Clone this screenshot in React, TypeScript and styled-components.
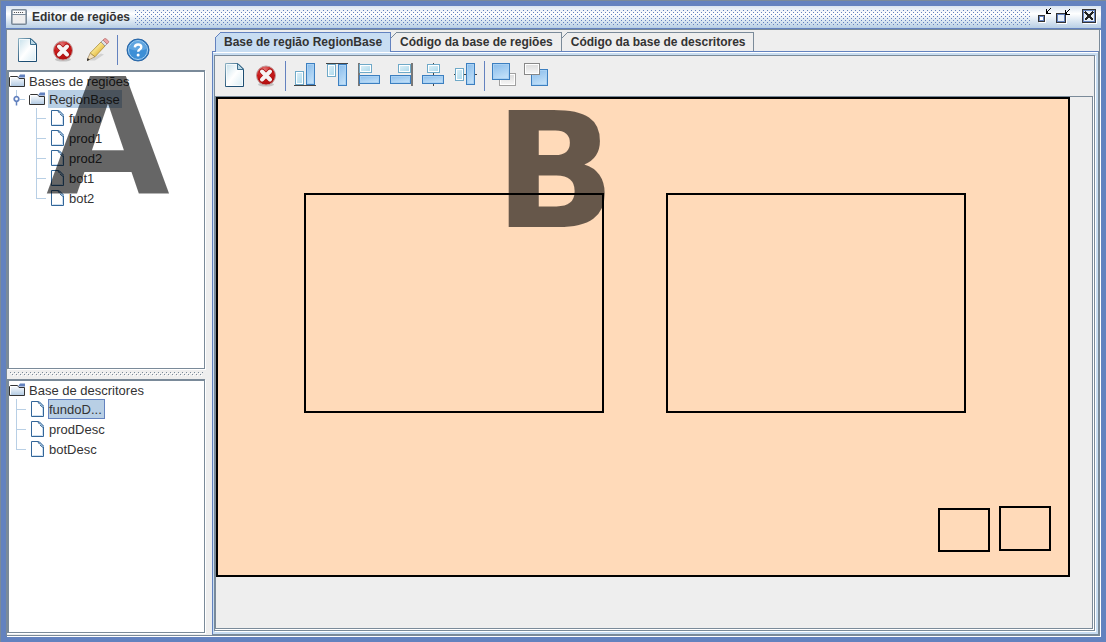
import React from 'react';
import styled, { createGlobalStyle } from 'styled-components';

const blue = '#6382bf';
const steel = '#7a8a99';
const pale = '#b8cfe5';
const tabFill = '#c8ddf2';
const panel = '#eeeeee';

const GlobalStyle = createGlobalStyle`
  * { box-sizing: border-box; }
  body { margin: 0; background: ${blue}; color: #333; font: 12px "Liberation Sans", Arial, sans-serif; }
  button { font: inherit; color: inherit; border: 0; background: none; padding: 0; }
  svg { display: block; flex: none; }
  ul { list-style: none; margin: 0; padding: 0; }
`;

const Frame = styled.div`
  display: flex;
  flex-direction: column;
  min-height: 100vh;
  padding: 6px 5px 5px 6px;
  background: ${blue};
  box-shadow: inset 1px 1px 0 ${steel};
`;

const TitleBar = styled.header`
  display: flex;
  align-items: center;
  height: 22px;
  padding: 0 4px 0 5px;
  gap: 5px;
  background: linear-gradient(#d8e4f0 0, #fff 35%, ${pale} 100%);
`;

const Title = styled.h1`
  margin: 0;
  font-size: 12px;
  line-height: 16px;
  white-space: nowrap;
`;

const TitleBumps = styled.div`
  flex: 1;
  height: 15px;
  background-image:
    conic-gradient(at 1px 1px, transparent 75%, ${blue} 0),
    conic-gradient(at 1px 1px, transparent 75%, ${blue} 0);
  background-size: 4px 4px;
  background-position: 0 0, 2px 2px;
`;

const WindowControls = styled.div`
  display: flex;
  gap: 4px;
`;

const WindowButton = styled.button<{ $gap?: number }>`
  width: 16px;
  height: 18px;
  margin-left: ${(p) => p.$gap ?? 0}px;
`;

const Body = styled.main`
  flex: 1;
  display: flex;
  min-width: 0;
  margin: 1px 1px 1px 0;
  background: ${panel};
  border: 1px solid ${steel};
  box-shadow: 1px 1px 0 #fff;
`;

const Sidebar = styled.aside`
  flex: none;
  width: 199px;
  margin-right: 6px;
  padding-bottom: 2px;
  display: flex;
  flex-direction: column;
`;

const Toolbar = styled.div`
  display: flex;
  align-items: center;
  height: 40px;
  padding-left: 2px;
`;

const ToolButton = styled.button<{ $wide?: boolean }>`
  display: flex;
  align-items: center;
  justify-content: center;
  width: ${(p) => (p.$wide ? 36 : 32)}px;
  height: 32px;
`;

const Separator = styled.div<{ $tight?: boolean }>`
  width: 1px;
  height: 30px;
  margin: 0 ${(p) => (p.$tight ? 2 : 3)}px 0 ${(p) => (p.$tight ? 0 : 3)}px;
  background: ${blue};
`;

const TreePane = styled.section<{ $share: number }>`
  position: relative;
  flex: ${(p) => p.$share} 1 0;
  margin-right: 1px;
  background: #fff;
  border: solid ${steel};
  border-width: 2px 1px 1px 2px;
  box-shadow: 1px 1px 0 #fff;
  font-size: 13px;
`;

const Splitter = styled.div`
  height: 10px;
  padding: 3px;
  background-image:
    conic-gradient(at 1px 1px, transparent 75%, ${steel} 0),
    conic-gradient(at 1px 1px, transparent 75%, ${steel} 0),
    conic-gradient(at 1px 1px, transparent 75%, #fff 0),
    conic-gradient(at 1px 1px, transparent 75%, #fff 0);
  background-size: 4px 4px;
  background-position: 1px 1px, 3px 3px, 0 0, 2px 2px;
  background-clip: content-box;
`;

const Row = styled.div<{ $leaf?: boolean }>`
  display: flex;
  align-items: center;
  height: ${(p) => (p.$leaf ? 20 : 18)}px;
`;

const Elbow = styled.span<{ $indent: number; $last?: boolean }>`
  align-self: stretch;
  width: 10px;
  margin: 0 5px 0 ${(p) => p.$indent}px;
  background:
    linear-gradient(${pale}, ${pale}) 0 0 / 1px ${(p) => (p.$last ? '10px' : '100%')} no-repeat,
    linear-gradient(${pale}, ${pale}) 0 10px / 10px 1px no-repeat;
`;

const HandleSlot = styled.span`
  width: 16px;
  margin-left: 4px;
`;

const Label = styled.span<{ $selected?: boolean; $focused?: boolean }>`
  height: ${(p) => (p.$focused ? 20 : 18)}px;
  line-height: ${(p) => (p.$focused ? 20 : 19)}px;
  margin-left: 3px;
  padding: 0 2px 0 0;
  border: solid ${(p) => (p.$focused ? blue : 'transparent')};
  border-width: ${(p) => (p.$focused ? '1px' : '0 0 0 1px')};
  background: ${(p) => (p.$selected ? pale : 'none')};
  white-space: nowrap;
`;

const AreaMark = styled.div<{ $x: number; $y: number }>`
  position: absolute;
  left: ${(p) => p.$x}px;
  top: ${(p) => p.$y}px;
  font: bold 160px/160px "DejaVu Sans", sans-serif;
  color: rgba(0, 0, 0, 0.6);
  pointer-events: none;
`;

const Workspace = styled.section`
  flex: 1;
  min-width: 0;
  display: flex;
  flex-direction: column;
  padding-top: 2px;
`;

const TabStrip = styled.div`
  display: flex;
  padding-left: 3px;
`;

const Tab = styled.button<{ $active?: boolean }>`
  position: relative;
  height: ${(p) => (p.$active ? 20 : 19)}px;
  margin-bottom: ${(p) => (p.$active ? -1 : 0)}px;
  padding: 0 8px 1px ${(p) => (p.$active ? 8 : 9)}px;
  z-index: ${(p) => (p.$active ? 1 : 0)};
  border: solid ${(p) => (p.$active ? blue : steel)};
  border-width: 1px 1px 0 ${(p) => (p.$active ? 1 : 0)}px;
  background: ${(p) => (p.$active ? tabFill : panel)};
  font-weight: bold;
  line-height: ${(p) => (p.$active ? 17 : 18)}px;
  white-space: nowrap;

  &::before {
    content: '';
    position: absolute;
    left: ${(p) => (p.$active ? -1 : 0)}px;
    top: -1px;
    width: 6px;
    height: 6px;
    background: linear-gradient(
      135deg,
      ${panel} 42%,
      ${(p) => (p.$active ? blue : steel)} 42% 54%,
      ${(p) => (p.$active ? tabFill : panel)} 54%
    );
  }
`;

const TabBody = styled.div`
  flex: 1;
  display: flex;
  flex-direction: column;
  padding: 3px 2px 2px 1px;
  background: ${tabFill};
  border: solid;
  border-width: 1px;
  border-color: ${blue} ${steel} ${steel} ${blue};
  box-shadow: inset 0 1px 0 #fff;
`;

const Editor = styled.div`
  flex: 1;
  display: flex;
  flex-direction: column;
  margin: 0 1px 1px 0;
  border: 1px solid ${steel};
  background: ${panel};
  box-shadow: 1px 1px 0 #fff;
`;

const EditorToolbar = styled(Toolbar)`
  padding-left: 3px;

  ${ToolButton} {
    margin-bottom: 2px;
  }
`;

const Viewport = styled.div`
  flex: 1;
  margin: 0 1px 1px 0;
  border: 1px solid ${steel};
  box-shadow: 1px 1px 0 #fff;
`;

const RegionCanvas = styled.div`
  position: relative;
  width: 854px;
  height: 480px;
  border: 2px solid #000;
  background: #ffdab9;
`;

const Region = styled.div<{ $x: number; $y: number; $w: number; $h: number }>`
  position: absolute;
  left: ${(p) => p.$x}px;
  top: ${(p) => p.$y}px;
  width: ${(p) => p.$w}px;
  height: ${(p) => p.$h}px;
  border: 2px solid #000;
`;

const Definitions = styled.svg`
  position: absolute;
`;

const Defs = () => (
  <Definitions width="0" height="0" aria-hidden="true">
    <defs>
      <linearGradient id="paper" x1="0" y1="0" x2="1" y2="1">
        <stop offset="0" stopColor="#c4dfea" />
        <stop offset="0.5" stopColor="#ffffff" />
        <stop offset="1" stopColor="#d5eaf3" />
      </linearGradient>
      <linearGradient id="paperEdge" x1="0" y1="0" x2="1" y2="1">
        <stop offset="0" stopColor="#8fb3c4" />
        <stop offset="0.6" stopColor="#1d4d72" />
        <stop offset="1" stopColor="#1d4d72" />
      </linearGradient>
      <linearGradient id="sky" x1="0" y1="0" x2="0.4" y2="1">
        <stop offset="0" stopColor="#86baea" />
        <stop offset="1" stopColor="#c0dff8" />
      </linearGradient>
      <linearGradient id="ice" x1="0" y1="0" x2="1" y2="1">
        <stop offset="0" stopColor="#e4f3f9" />
        <stop offset="1" stopColor="#a6d6ea" />
      </linearGradient>
      <linearGradient id="silver" x1="0" y1="0" x2="0" y2="1">
        <stop offset="0" stopColor="#dadada" />
        <stop offset="1" stopColor="#f8f8f8" />
      </linearGradient>
      <radialGradient id="ruby" cx="0.4" cy="0.2" r="0.8">
        <stop offset="0" stopColor="#e27a7a" />
        <stop offset="0.5" stopColor="#cc1c1c" />
        <stop offset="1" stopColor="#b00c0c" />
      </radialGradient>
      <linearGradient id="wood" x1="0" y1="0" x2="1" y2="1">
        <stop offset="0.3" stopColor="#fdf0a0" />
        <stop offset="0.7" stopColor="#e6bc45" />
      </linearGradient>
      <linearGradient id="folder" x1="0" y1="0" x2="0" y2="1">
        <stop offset="0" stopColor="#ffffff" />
        <stop offset="1" stopColor="#b0c9e2" />
      </linearGradient>
    </defs>
  </Definitions>
);

const Icon = ({ children }: { children: React.ReactNode }) => (
  <svg width="24" height="24" viewBox="0 0 24 24" aria-hidden="true">{children}</svg>
);

const NewIcon = () => (
  <Icon>
    <path d="M3.5.5h12.500l5.500 5.500v17.500h-18z" fill="url(#paper)" stroke="url(#paperEdge)" />
    <path d="M4.500 22.500v-21h10M4.500 22.500h16v-14" fill="none" stroke="#fff" opacity=".7" />
    <path d="M15.500 .5v6h6z" fill="#bcd8e5" stroke="#3d7090" />
  </Icon>
);

const DeleteIcon = () => (
  <Icon>
    <ellipse cx="12" cy="21.500" rx="8" ry="2" fill="#c4c4c4" />
    <circle cx="12" cy="12.500" r="9.500" fill="url(#ruby)" stroke="#c09a9a" />
    <path d="M8 8.500l8 8M16 8.500l-8 8" stroke="#a81010" strokeWidth="5.500" strokeLinecap="round" />
    <path d="M8 8.500l8 8M16 8.500l-8 8" stroke="#f6f4f4" strokeWidth="4" strokeLinecap="round" />
  </Icon>
);

const PencilIcon = () => (
  <Icon>
    <path d="M2 22.500l12-7 3 1-9 6z" fill="#d2d2d2" />
    <path d="M-.5 23l3.800-8 4.700 3.800z" fill="#f3dfba" stroke="#a08c66" strokeWidth=".8" />
    <path d="M-1 23.500l1.800-3.500 1.900 1.700z" fill="#333" />
    <path d="M3.300 15L14 4l4 4L8 18.800z" fill="url(#wood)" stroke="#a98a35" strokeWidth=".8" />
    <path d="M14 4l2-2 4 4-2 2z" fill="#dfe3e6" stroke="#8d8d8d" strokeWidth=".7" />
    <path d="M16 2l1-1q1-.8 2-.2l2.300 2q.9 1.100 0 2L20 6z" fill="#eda3a3" stroke="#bf7575" strokeWidth=".8" />
  </Icon>
);

const HelpIcon = () => (
  <Icon>
    <circle cx="12" cy="12" r="11" fill="#2a78c0" stroke="#2a66a6" />
    <circle cx="12" cy="12" r="9.500" fill="#3d8fd6" stroke="#a7d0f1" />
    <path d="M3.500 11a8.500 8.500 0 0 1 17 0q-8 3-17 0z" fill="#78b4e6" opacity=".6" />
    <path d="M8.800 9.300q.2-2.800 3.300-2.800t3.200 2.500q0 1.500-1.700 2.500-1.400.8-1.400 2.300" fill="none" stroke="#fff" strokeWidth="2.400" />
    <circle cx="12.100" cy="17" r="1.500" fill="#fff" />
  </Icon>
);

type BoxSpec = [number, number, number, number];

const ArrangeIcon = ({ small, big, line, dark }: { small: BoxSpec; big: BoxSpec; line: string; dark?: boolean }) => (
  <Icon>
    <path d={line} stroke={dark ? '#444' : '#777'} strokeWidth={dark ? 1 : 2} />
    <rect x={small[0]} y={small[1]} width={small[2]} height={small[3]} fill="url(#ice)" stroke="#6ea9c8" />
    <rect x={small[0] + 1} y={small[1] + 1} width={small[2] - 2} height={small[3] - 2} fill="none" stroke="#fff" />
    <rect x={big[0]} y={big[1]} width={big[2]} height={big[3]} fill="url(#sky)" stroke="#3c7fc0" />
    <rect x={big[0] + 1} y={big[1] + 1} width={big[2] - 2} height={big[3] - 2} fill="none" stroke="#a9d1f3" />
  </Icon>
);

const ToFrontIcon = () => (
  <Icon>
    <rect x="7.500" y="10.500" width="16" height="12" fill="url(#silver)" stroke="#a0a0a0" />
    <rect x="8.500" y="11.500" width="14" height="10" fill="none" stroke="#fff" />
    <rect x=".5" y=".5" width="17" height="16" fill="url(#sky)" stroke="#3c7fc0" />
    <rect x="1.500" y="1.500" width="15" height="14" fill="none" stroke="#a9d1f3" />
  </Icon>
);

const ToBackIcon = () => (
  <Icon>
    <rect x="7.500" y="6.500" width="16" height="16" fill="url(#sky)" stroke="#3c7fc0" />
    <rect x="8.500" y="7.500" width="14" height="14" fill="none" stroke="#a9d1f3" />
    <rect x=".5" y=".5" width="15" height="11" fill="url(#silver)" stroke="#888" />
    <rect x="1.500" y="1.500" width="13" height="9" fill="none" stroke="#fff" />
  </Icon>
);

const FolderIcon = () => (
  <svg width="16" height="14" viewBox="0 0 16 14" aria-hidden="true">
    <path d="M.5 12.500v-9l1-1h7l1.500 2h5.500v8z" fill="url(#folder)" stroke="#333" />
    <path d="M1.500 11.500v-8h6.500" fill="none" stroke="#fff" />
    <path d="M9 3.500l2-3h5v3z" fill={blue} />
  </svg>
);

const LeafIcon = () => (
  <svg width="14" height="16" viewBox="0 0 14 16" aria-hidden="true">
    <path d="M.5.5h7l5 5v10h-12z" fill="#fff" stroke="#336699" />
    <path d="M11.500 7v7.500h-10" fill="none" stroke="#cfe0f0" />
    <path d="M7.500 1v1.500l3.500 3.500h1.500v-1.500l-4-4z" fill="#b8cfe5" />
    <path d="M6.500 .5l2 2.500M8 .5l4.500 4.500M9 4l3.500 3" stroke="#336699" />
  </svg>
);

const HandleIcon = () => (
  <svg width="16" height="18" viewBox="0 0 16 18" aria-hidden="true">
    <path d="M3.500 0v7M7 9.500h5" stroke={pale} />
    <circle cx="3.500" cy="9" r="2.300" fill="#fff" stroke={blue} strokeWidth="1.700" />
    <path d="M3.500 11.500v4" stroke={blue} strokeWidth="1.500" />
  </svg>
);

const WindowIcon = () => (
  <svg width="16" height="16" viewBox="0 0 16 16" aria-hidden="true">
    <rect x=".8" y=".8" width="14.400" height="14.400" rx="1" fill="#eee" stroke={steel} strokeWidth="1.600" />
    <path d="M2 2.500h12M2 4.500h12" stroke="#fff" />
    <path d="M3 3.500h10" stroke="#555" strokeDasharray="1 1" />
    <path d="M1 5.500h14" stroke={steel} />
  </svg>
);

const MinimizeIcon = () => (
  <svg width="16" height="18" viewBox="0 0 16 18" aria-hidden="true" shapeRendering="crispEdges">
    <rect x="3" y="8" width="7" height="7" fill="#fff" />
    <rect x="2" y="7" width="7" height="7" fill="#333" />
    <rect x="3" y="8" width="5" height="5" fill={blue} />
    <rect x="4" y="9" width="3" height="3" fill="#fff" />
    <path d="M10.500 1v4.500h4M14.500 .5l-4 4.500" fill="none" stroke="#000" />
  </svg>
);

const MaximizeIcon = () => (
  <svg width="16" height="18" viewBox="0 0 16 18" aria-hidden="true" shapeRendering="crispEdges">
    <path d="M1 15.500h9.500v-8" fill="none" stroke="#fff" />
    <rect x=".5" y="5.500" width="9" height="9" fill="#e8f0f8" stroke="#333" />
    <rect x="1.500" y="6.500" width="7" height="7" fill="none" stroke={blue} />
    <path d="M9.500 2v4.500h4M13.500 1.500l-4 4.500" fill="none" stroke="#000" />
  </svg>
);

const CloseIcon = () => (
  <svg width="16" height="18" viewBox="0 0 16 18" aria-hidden="true" shapeRendering="crispEdges">
    <path d="M2 15.500h13.500v-13" fill="none" stroke="#fff" />
    <rect x="1.500" y="1.500" width="13" height="13" fill="#e8f0f8" stroke="#333" />
    <rect x="2.500" y="2.500" width="11" height="11" fill="none" stroke={blue} />
    <path d="M4 4l8 8M12 4l-8 8" stroke="#222" strokeWidth="1.500" />
  </svg>
);

const regionNames = ['fundo', 'prod1', 'prod2', 'bot1', 'bot2'];
const descriptors = ['fundoD...', 'prodDesc', 'botDesc'];

const regions: BoxSpec[] = [
  [86, 94, 300, 220],
  [448, 94, 300, 220],
  [720, 409, 52, 44],
  [781, 407, 52, 45],
];

const arrangeTools: { name: string; small: BoxSpec; big: BoxSpec; line: string; dark?: boolean }[] = [
  { name: 'Alinhar abaixo', small: [2.5, 8.5, 8, 13], big: [13.5, 0.5, 8, 21], line: 'M1 22.500h22', dark: true },
  { name: 'Alinhar acima', small: [2.5, 1.5, 8, 12], big: [13.5, 1.5, 8, 21], line: 'M1 .5h22', dark: true },
  { name: 'Alinhar à esquerda', small: [2.5, 1.5, 12, 8], big: [2.5, 12.5, 20, 8], line: 'M2 0v23' },
  { name: 'Alinhar à direita', small: [9.5, 1.5, 12, 8], big: [1.5, 12.5, 20, 8], line: 'M23 0v23' },
  { name: 'Centralizar na vertical', small: [6.5, 1.5, 12, 8], big: [1.5, 12.5, 21, 8], line: 'M12.500 0v23', dark: true },
  { name: 'Centralizar na horizontal', small: [2.5, 5.5, 8, 12], big: [13.5, 0.5, 8, 21], line: 'M1 11.500h23', dark: true },
];

export default function App() {
  return (
    <Frame>
      <GlobalStyle />
      <Defs />
      <TitleBar>
        <WindowIcon />
        <Title>Editor de regiões</Title>
        <TitleBumps />
        <WindowControls>
          <WindowButton aria-label="Minimizar"><MinimizeIcon /></WindowButton>
          <WindowButton aria-label="Maximizar"><MaximizeIcon /></WindowButton>
          <WindowButton $gap={5} aria-label="Fechar"><CloseIcon /></WindowButton>
        </WindowControls>
      </TitleBar>
      <Body>
        <Sidebar>
          <Toolbar>
            <ToolButton $wide aria-label="Novo"><NewIcon /></ToolButton>
            <ToolButton $wide aria-label="Excluir"><DeleteIcon /></ToolButton>
            <ToolButton $wide aria-label="Editar"><PencilIcon /></ToolButton>
            <Separator $tight />
            <ToolButton $wide aria-label="Ajuda"><HelpIcon /></ToolButton>
          </Toolbar>
          <TreePane $share={299}>
            <Row><FolderIcon /><Label>Bases de regiões</Label></Row>
            <Row>
              <HandleSlot><HandleIcon /></HandleSlot>
              <FolderIcon />
              <Label $selected>RegionBase</Label>
            </Row>
            <ul>
              {regionNames.map((name, i) => (
                <li key={name}>
                  <Row $leaf>
                    <Elbow $indent={27} $last={i === regionNames.length - 1} />
                    <LeafIcon />
                    <Label>{name}</Label>
                  </Row>
                </li>
              ))}
            </ul>
            <AreaMark $x={37} $y={-14}>A</AreaMark>
          </TreePane>
          <Splitter />
          <TreePane $share={254}>
            <Row><FolderIcon /><Label>Base de descritores</Label></Row>
            <ul>
              {descriptors.map((name, i) => (
                <li key={name}>
                  <Row $leaf>
                    <Elbow $indent={7} $last={i === descriptors.length - 1} />
                    <LeafIcon />
                    <Label $selected={i === 0} $focused={i === 0}>{name}</Label>
                  </Row>
                </li>
              ))}
            </ul>
          </TreePane>
        </Sidebar>
        <Workspace>
          <TabStrip role="tablist">
            <Tab role="tab" aria-selected="true" $active>Base de região RegionBase</Tab>
            <Tab role="tab" aria-selected="false">Código da base de regiões</Tab>
            <Tab role="tab" aria-selected="false">Código da base de descritores</Tab>
          </TabStrip>
          <TabBody>
            <Editor>
              <EditorToolbar>
                <ToolButton aria-label="Nova região"><NewIcon /></ToolButton>
                <ToolButton aria-label="Excluir região"><DeleteIcon /></ToolButton>
                <Separator />
                {arrangeTools.map(({ name, ...shape }) => (
                  <ToolButton key={name} aria-label={name}><ArrangeIcon {...shape} /></ToolButton>
                ))}
                <Separator />
                <ToolButton aria-label="Trazer para frente"><ToFrontIcon /></ToolButton>
                <ToolButton aria-label="Enviar para trás"><ToBackIcon /></ToolButton>
              </EditorToolbar>
              <Viewport>
                <RegionCanvas>
                  <AreaMark $x={276} $y={-7}>B</AreaMark>
                  {regions.map(([x, y, w, h]) => (
                    <Region key={`${x}-${y}`} $x={x} $y={y} $w={w} $h={h} />
                  ))}
                </RegionCanvas>
              </Viewport>
            </Editor>
          </TabBody>
        </Workspace>
      </Body>
    </Frame>
  );
}
